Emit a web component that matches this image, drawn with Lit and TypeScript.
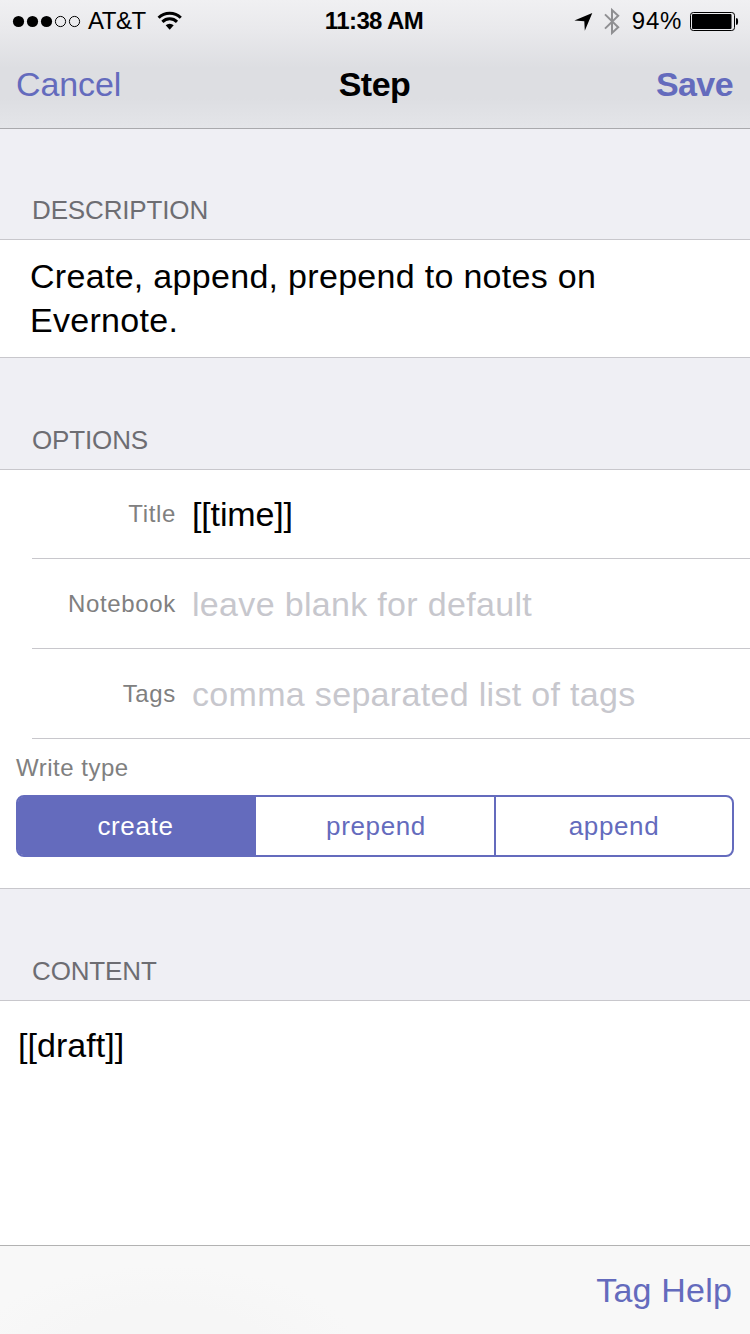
import { LitElement, html, css, svg } from "lit";
import { customElement, property, state } from "lit/decorators.js";
import { classMap } from "lit/directives/class-map.js";

const base = css`
  :host {
    display: block;
    box-sizing: border-box;
    font-family: "Liberation Sans", Arial, sans-serif;
    white-space: nowrap;
  }
  *, *::before, *::after { box-sizing: border-box; }
`;

@customElement("status-bar")
class StatusBar extends LitElement {
  static styles = [base, css`
    :host { height: 40px; }
    .bar { display: grid; grid-template-columns: 1fr auto 1fr; height: 40px; padding: 0 11px 0 12px; }
    .side { display: flex; align-items: center; font-size: 24px; line-height: 40px; }
    .right { justify-content: flex-end; }
    .signal { margin-right: 7px; flex: none; }
    .carrier { letter-spacing: -0.5px; }
    .wifi { margin-left: 11px; flex: none; }
    .clock { font-size: 24px; font-weight: bold; line-height: 42px; letter-spacing: -0.6px; margin-left: -3px; }
    .arrow { margin-right: 11px; flex: none; }
    .bt { margin-right: 12px; flex: none; }
    .level { letter-spacing: 0.7px; margin-right: 7px; }
    .battery { flex: none; }
  `];

  render() {
    return html`
      <div class="bar">
        <div class="side">
          <svg class="signal" width="69" height="40" viewBox="0 0 69 40">
            ${[0, 1, 2, 3, 4].map((i) => i < 3
              ? svg`<circle cx=${6.5 + i * 14} cy="20.5" r="5.6"/>`
              : svg`<circle cx=${6.5 + i * 14} cy="20.5" r="5.1" fill="none" stroke="#000" stroke-width="1"/>`)}
          </svg>
          <span class="carrier">AT&amp;T</span>
          <svg class="wifi" width="26" height="40" viewBox="0 0 26 40">
            <g fill="none" stroke="#000" stroke-width="3">
              <path d="M1.6 16.700a15.800 15.800 0 0 1 22.200 0"/>
              <path d="M5.400 20.900a10.300 10.300 0 0 1 14.600 0"/>
            </g>
            <path d="M8.700 24.300a5.700 5.700 0 0 1 8 0L12.700 28.800z"/>
          </svg>
        </div>
        <div class="clock">11:38 AM</div>
        <div class="side right">
          <svg class="arrow" width="19" height="40" viewBox="0 0 19 40">
            <path d="M18.300 12L10.800 29.700 10.300 20.300 0.400 19.600z"/>
          </svg>
          <svg class="bt" width="16" height="40" viewBox="0 0 16 40">
            <path d="M1 13.400L14.200 26.200 8 32V9L14.200 14.800 1 27.600" fill="none" stroke="#8f8f92" stroke-width="2"/>
          </svg>
          <span class="level">94%</span>
          <svg class="battery" width="50" height="40" viewBox="0 0 50 40">
            <rect x="1.500" y="11.500" width="44" height="18" rx="2.800" fill="none" stroke="#000" stroke-width="1"/>
            <rect x="3" y="13" width="39.500" height="15" rx="1"/>
            <path d="M47 17.300h1.200c1.200 1 1.200 5.400 0 6.400H47z"/>
          </svg>
        </div>
      </div>
    `;
  }
}

@customElement("nav-bar")
class NavBar extends LitElement {
  static styles = [base, css`
    .bar {
      display: grid; grid-template-columns: 1fr auto 1fr; height: 88px;
      padding: 0 17px 0 16px; font-size: 34px; line-height: 89px;
    }
    .cancel { color: #646bbd; letter-spacing: -0.1px; }
    .title { font-weight: bold; letter-spacing: -0.5px; }
    .save { color: #646bbd; font-weight: bold; text-align: right; letter-spacing: -0.6px; }
  `];

  render() {
    return html`
      <div class="bar">
        <span class="cancel">Cancel</span>
        <span class="title">Step</span>
        <span class="save">Save</span>
      </div>
    `;
  }
}

@customElement("section-header")
class SectionHeader extends LitElement {
  @property() label = "";

  static styles = [base, css`
    :host { background: #efeff4; border-bottom: 1px solid #c8c7cc; display: flex; align-items: flex-end; }
    .label {
      padding: 0 0 14px 32px; font-size: 26px; line-height: 30px;
      letter-spacing: -0.15px; color: #6d6d72;
    }
  `];

  render() {
    return html`<span class="label">${this.label}</span>`;
  }
}

@customElement("option-row")
class OptionRow extends LitElement {
  @property() label = "";
  @property() value = "";
  @property() placeholder = "";

  static styles = [base, css`
    :host { padding-left: 32px; }
    .row {
      display: grid; grid-template-columns: 144px 1fr; column-gap: 16px;
      border-bottom: 1px solid #c8c7cc; height: 100%; align-items: center;
    }
    .label { font-size: 24px; line-height: 28px; letter-spacing: 0.65px; text-align: right; color: #808080; }
    .value { font-size: 34px; line-height: 40px; letter-spacing: -0.15px; color: #000; }
    .value.hint { color: #c7c7cd; letter-spacing: 0.32px; }
  `];

  render() {
    return html`
      <div class="row">
        <span class="label">${this.label}</span>
        <span class=${classMap({ value: true, hint: !this.value })}>${this.value || this.placeholder}</span>
      </div>
    `;
  }
}

@customElement("segmented-control")
class SegmentedControl extends LitElement {
  @property({ attribute: false }) items: string[] = [];
  @state() selected = 0;

  static styles = [base, css`
    .group {
      display: grid; grid-template-columns: 238px 238px 1fr; height: 62px;
      border: 2px solid #646bbd; border-radius: 8px; background: #fff;
    }
    .segment {
      font-size: 26px; line-height: 58px; letter-spacing: 0.65px; text-align: center;
      color: #646bbd; cursor: pointer;
    }
    .segment:first-child { border-radius: 5px 0 0 5px; padding-right: 3px; }
    .segment:last-child { border-radius: 0 5px 5px 0; }
    .segment + .segment { border-left: 2px solid #646bbd; }
    .segment.on + .segment { border-left-color: #fff; }
    .segment.on { background: #646bbd; color: #fff; }
  `];

  render() {
    return html`
      <div class="group">
        ${this.items.map((item, i) => html`
          <div class=${classMap({ segment: true, on: i === this.selected })}
               @click=${() => (this.selected = i)}>${item}</div>`)}
      </div>
    `;
  }
}

@customElement("app-root")
class AppRoot extends LitElement {
  static styles = [base, css`
    :host { width: 750px; height: 1334px; display: flex; flex-direction: column; background: #fff; overflow: hidden; color: #000; }
    .top {
      height: 129px; flex: none; border-bottom: 1px solid #a9a9ad;
      background: linear-gradient(#f0f0f2 0, #e9e9ec 30px, #dddee2 68px, #dddee2 98px, #e4e5e9 128px);
    }
    .h-first { height: 111px; flex: none; }
    .h-next { height: 112px; flex: none; }
    .description {
      height: 118px; flex: none; padding: 14px 30px; border-bottom: 1px solid #c8c7cc;
      font-size: 34px; line-height: 44px; letter-spacing: 0.3px; white-space: normal;
    }
    .options { height: 419px; flex: none; border-bottom: 1px solid #c8c7cc; }
    .row-first { height: 89px; }
    .row { height: 90px; }
    .write { padding: 0 16px; }
    .caption { padding: 15px 0 14px; font-size: 24px; line-height: 27px; letter-spacing: 0.5px; color: #808080; }
    .content { flex: 1; padding: 23px 18px; font-size: 34px; line-height: 42px; letter-spacing: 0.05px; }
    .toolbar {
      height: 89px; flex: none; border-top: 1px solid #b2b2b2; padding-right: 18px;
      background: radial-gradient(ellipse 190px 80px at 165px 100px, #f6f6f6 0, #f6f6f6 50%, #f8f8f8 100%);
      text-align: right; font-size: 34px; line-height: 89px; letter-spacing: 0.2px; color: #646bbd;
    }
  `];

  render() {
    return html`
      <header class="top">
        <status-bar></status-bar>
        <nav-bar></nav-bar>
      </header>
      <section-header class="h-first" label="DESCRIPTION"></section-header>
      <div class="description">Create, append, prepend to notes on Evernote.</div>
      <section-header class="h-next" label="OPTIONS"></section-header>
      <div class="options">
        <option-row class="row-first" label="Title" value="[[time]]"></option-row>
        <option-row class="row" label="Notebook" placeholder="leave blank for default"></option-row>
        <option-row class="row" label="Tags" placeholder="comma separated list of tags"></option-row>
        <div class="write">
          <div class="caption">Write type</div>
          <segmented-control .items=${["create", "prepend", "append"]}></segmented-control>
        </div>
      </div>
      <section-header class="h-next" label="CONTENT"></section-header>
      <div class="content">[[draft]]</div>
      <footer class="toolbar">Tag Help</footer>
    `;
  }
}
